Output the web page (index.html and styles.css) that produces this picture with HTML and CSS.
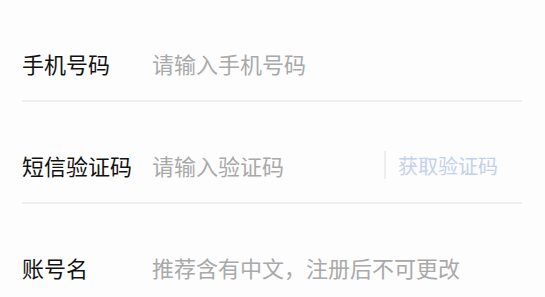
FILE: index.html
```html
<!DOCTYPE html>
<html lang="zh-CN">
<head>
    <meta charset="UTF-8">
    <meta name="viewport" content="width=device-width, initial-scale=1.0">
    <title>注册</title>
    <link rel="stylesheet" href="styles.css">
</head>
<body>
    <form class="form">
        <div class="field">
            <label class="label" for="phone">手机号码</label>
            <input class="input" type="text" id="phone" placeholder="请输入手机号码">
        </div>
        <div class="field">
            <label class="label" for="code">短信验证码</label>
            <input class="input" type="text" id="code" placeholder="请输入验证码">
            <span class="divider"></span>
            <button class="get-code" type="button">获取验证码</button>
        </div>
        <div class="field last">
            <label class="label" for="account">账号名</label>
            <input class="input" type="text" id="account" placeholder="推荐含有中文，注册后不可更改">
        </div>
    </form>
</body>
</html>
```

FILE: styles.css
```css
body {
    margin: 0;
    padding: 0;
    background: #fdfdfd;
    font-family: "Noto Sans CJK SC", "Noto Sans", sans-serif;
}

.form {
    width: 500px;
    margin-left: 22px;
}

.field {
    display: flex;
    align-items: center;
    height: 30px;
    padding: 48px 0 22px;
    border-bottom: 2px solid #efefef;
}

.field.last {
    border-bottom: none;
}

.label {
    width: 130px;
    flex-shrink: 0;
    font-size: 22px;
    color: #111;
}

.input {
    flex: 1;
    min-width: 0;
    border: none;
    outline: none;
    background: transparent;
    padding: 0;
    font-family: inherit;
    font-size: 22px;
    color: #333;
}

.input::placeholder {
    color: #a9a9a9;
}

.divider {
    width: 2px;
    height: 28px;
    background: #ededed;
    margin-right: 12px;
}

.get-code {
    border: none;
    background: none;
    padding: 0;
    margin-right: 24px;
    font-family: inherit;
    font-size: 20px;
    color: #c3d0ee;
    cursor: pointer;
}
```
